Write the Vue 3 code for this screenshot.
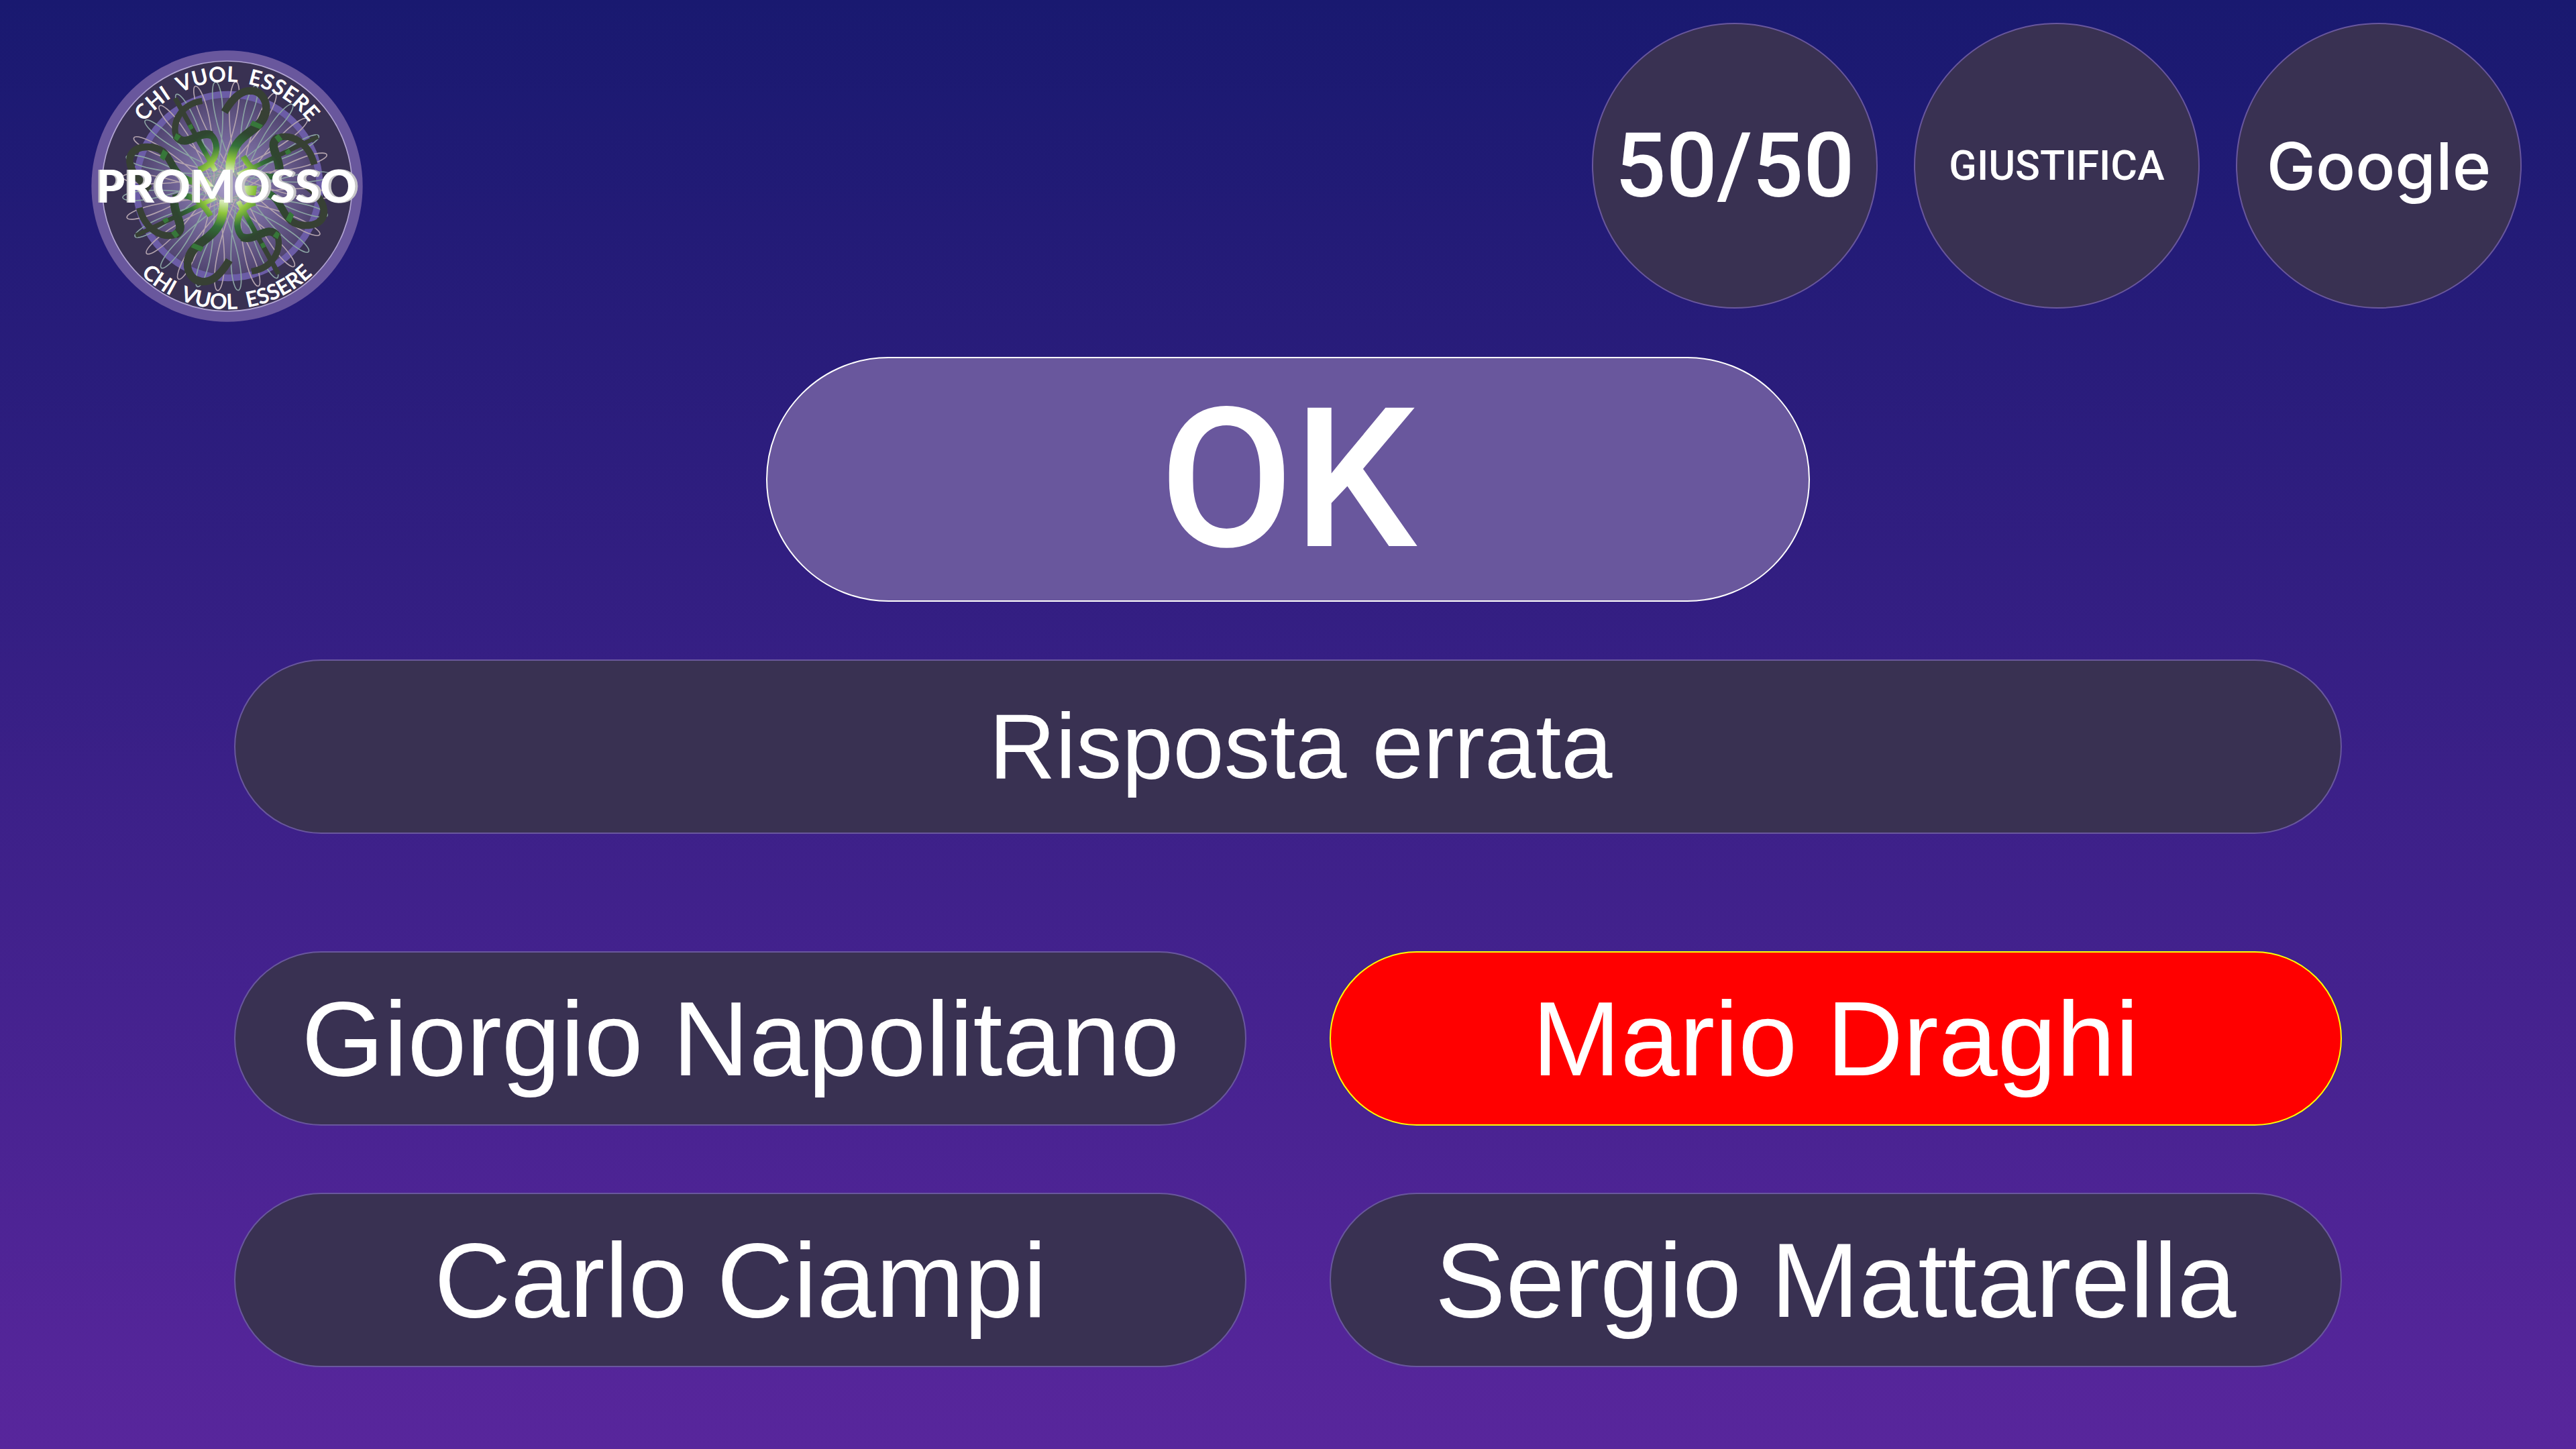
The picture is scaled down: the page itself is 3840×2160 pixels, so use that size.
<script setup>
const lifelines = [
  { id: 'fifty', label: '50/50' },
  { id: 'explain', label: 'GIUSTIFICA' },
  { id: 'google', label: 'Google' },
]

const answers = [
  { text: 'Giorgio Napolitano', wrong: false },
  { text: 'Mario Draghi', wrong: true },
  { text: 'Carlo Ciampi', wrong: false },
  { text: 'Sergio Mattarella', wrong: false },
]

// Guilloche petals behind the emblem, drawn around the badge centre
const CX = 655
const CY = 653
const COUNT = 32
const point = (radius, degrees) => {
  const a = (degrees * Math.PI) / 180
  return `${(CX + radius * Math.sin(a)).toFixed(1)} ${(CY - radius * Math.cos(a)).toFixed(1)}`
}
const petals = Array.from({ length: COUNT }, (_, i) => {
  const a = (i * 360) / COUNT + 5
  return {
    d: `M${point(75, a + 110)} C${point(655, a - 15)} ${point(655, a + 15)} ${point(75, a - 110)}`,
    tone: i % 2 ? 'teal' : 'rose',
  }
})
</script>

<template>
  <main class="game">
    <header class="top">
      <svg class="badge" viewBox="49 46 1214 1214" role="img" aria-label="Chi vuol essere promosso">
        <defs>
          <radialGradient id="glow" gradientUnits="userSpaceOnUse" cx="655" cy="653" r="400">
            <stop offset="0" stop-color="#a79cc8" />
            <stop offset="0.5" stop-color="#75689a" />
            <stop offset="1" stop-color="#50446f" />
          </radialGradient>
          <radialGradient id="ribbon" gradientUnits="userSpaceOnUse" cx="655" cy="653" r="420">
            <stop offset="0.15" stop-color="#e3f1cb" />
            <stop offset="0.29" stop-color="#8fc63d" />
            <stop offset="0.44" stop-color="#33713a" />
            <stop offset="0.6" stop-color="#2f4630" />
            <stop offset="0.85" stop-color="#374034" />
          </radialGradient>
          <path id="arc-top" d="M189 653 A466 466 0 0 1 1121 653" />
          <path id="arc-bottom" d="M105 653 A550 550 0 0 0 1205 653" />
          <clipPath id="half-left"><rect x="0" y="500" width="570" height="300" /></clipPath>
          <clipPath id="half-right"><rect x="655" y="500" width="700" height="300" /></clipPath>
        </defs>

        <circle cx="656" cy="653" r="606" fill="#69579d" />
        <circle cx="656" cy="653" r="559" fill="#393152" stroke="#b2a5d2" stroke-width="5" />
        <circle cx="660" cy="653" r="410" fill="url(#glow)" stroke="#6b5ca6" stroke-width="30" />

        <path v-for="(p, i) in petals" :key="i" :d="p.d" :class="['petal', p.tone]" />

        <g v-for="turn in [0, 180]" :key="turn" :transform="`rotate(${turn} 655 653)`">
          <g class="ribbons">
            <path stroke-width="34" d="M644 322 C690 245 725 226 765 226 C815 228 842 285 826 328" />
            <path stroke-width="40" d="M828 318 C808 430 668 395 668 592" />
            <path stroke-width="22" d="M424 260 L604 585" />
            <path stroke-width="28" d="M545 272 C440 288 405 385 432 436" />
            <path stroke-width="36" d="M428 428 C470 490 530 400 587 425" />
            <path stroke-width="28" d="M576 418 C627 450 620 555 528 580" />
            <path stroke-width="32" d="M312 665 C200 590 190 485 290 478 C430 470 380 610 505 632" />
            <path stroke-width="30" d="M264 750 C290 850 370 890 428 868" />
            <path stroke-width="38" d="M425 870 C475 840 422 790 420 728" />
            <path stroke-width="20" d="M248 874 L606 704" />
            <path stroke-width="26" d="M415 705 C450 690 520 680 582 786" />
          </g>
          <path class="band" d="M770 360 L816 380 L804 398 L758 380 Z M428 416 L450 430 L434 452 L418 440 Z M480 383 L498 374 L506 394 L490 403 Z M370 488 L392 504 L374 540 L355 524 Z M406 862 L424 848 L442 872 L424 886 Z M366 802 L388 792 L396 808 L378 820 Z" />
          <path fill="url(#ribbon)" d="M520 655 L598 655 L560 612 L526 612 Z" />
        </g>

        <text class="motto"><textPath href="#arc-top" startOffset="50%">CHI&nbsp; VUOL&nbsp; ESSERE</textPath></text>
        <text class="motto"><textPath href="#arc-bottom" startOffset="50%">CHI&nbsp; VUOL&nbsp; ESSERE</textPath></text>

        <g fill="#c6c5c7">
          <use href="#wordmark" x="-8" clip-path="url(#half-left)" />
          <use href="#wordmark" x="12" clip-path="url(#half-right)" />
        </g>
        <g fill="#ffffff">
          <text id="wordmark" class="wordmark" x="654" y="727">PROMOSSO</text>
        </g>
      </svg>

      <nav class="lifelines" aria-label="Aiuti">
        <button v-for="l in lifelines" :key="l.id" type="button" :class="['lifeline', l.id]">{{ l.label }}</button>
      </nav>
    </header>

    <button type="button" class="confirm">OK</button>

    <h1 class="message">&nbsp;Risposta errata</h1>

    <section class="answers" aria-label="Risposte">
      <button v-for="a in answers" :key="a.text" type="button" :class="['answer', { wrong: a.wrong }]">{{ a.text }}</button>
    </section>
  </main>
</template>

<style>
body {
  margin: 0;
}
</style>

<style scoped>
.game {
  box-sizing: border-box;
  min-height: 100vh;
  padding: 34px 0 120px;
  display: flex;
  flex-direction: column;
  align-items: center;
  background: linear-gradient(180deg, #191970, #58269c);
  color: #ffffff;
  font-family: "Liberation Sans", Arial, sans-serif;
}

button {
  margin: 0;
  padding: 0;
  color: inherit;
  font-family: inherit;
  cursor: pointer;
}

.top {
  box-sizing: border-box;
  width: 100%;
  padding: 0 81px 0 136px;
  display: flex;
  justify-content: space-between;
  align-items: flex-start;
}

.badge {
  width: 405px;
  height: 405px;
  margin-top: 41px;
}

.petal {
  fill: none;
  stroke-width: 5;
}

.teal {
  stroke: #8ba3a3;
}

.rose {
  stroke: #b3a3ae;
}

.ribbons {
  fill: none;
  stroke: url(#ribbon);
}

.band {
  fill: #37773a;
}

.motto {
  fill: #ffffff;
  font: 700 96px Lato, sans-serif;
  text-anchor: middle;
}

.wordmark {
  font: 900 202px Lato, sans-serif;
  text-anchor: middle;
}

.lifelines {
  display: flex;
  gap: 54px;
}

.lifeline {
  box-sizing: border-box;
  width: 426px;
  height: 426px;
  border: 2px solid #69579d;
  border-radius: 50%;
  background: #393152;
  font-family: Roboto, sans-serif;
  font-weight: 500;
}

.fifty {
  font-size: 134px;
}

.explain {
  font-size: 61px;
}

.google {
  font-family: Inter, sans-serif;
  font-size: 98px;
}

.confirm {
  box-sizing: border-box;
  width: 40.5%;
  height: 365px;
  margin-top: 52px;
  border: 2px solid #ffffff;
  border-radius: 183px;
  background: #69579d;
  font-family: Roboto, sans-serif;
  font-size: 290px;
  font-weight: 500;
  line-height: 360px;
}

.message,
.answer {
  box-sizing: border-box;
  height: 260px;
  border: 2px solid #69579d;
  border-radius: 130px;
  background: #393152;
  font-weight: 400;
  line-height: 256px;
  text-align: center;
}

.message {
  width: 81.8%;
  margin: 86px 0 0;
  font-size: 137px;
}

.answers {
  width: 81.8%;
  margin-top: 175px;
  display: grid;
  grid-template-columns: 1fr 1fr;
  gap: 100px 124px;
}

.answer {
  font-size: 158px;
}

.answer.wrong {
  border-color: #ffff00;
  background: #ff0000;
}
</style>
